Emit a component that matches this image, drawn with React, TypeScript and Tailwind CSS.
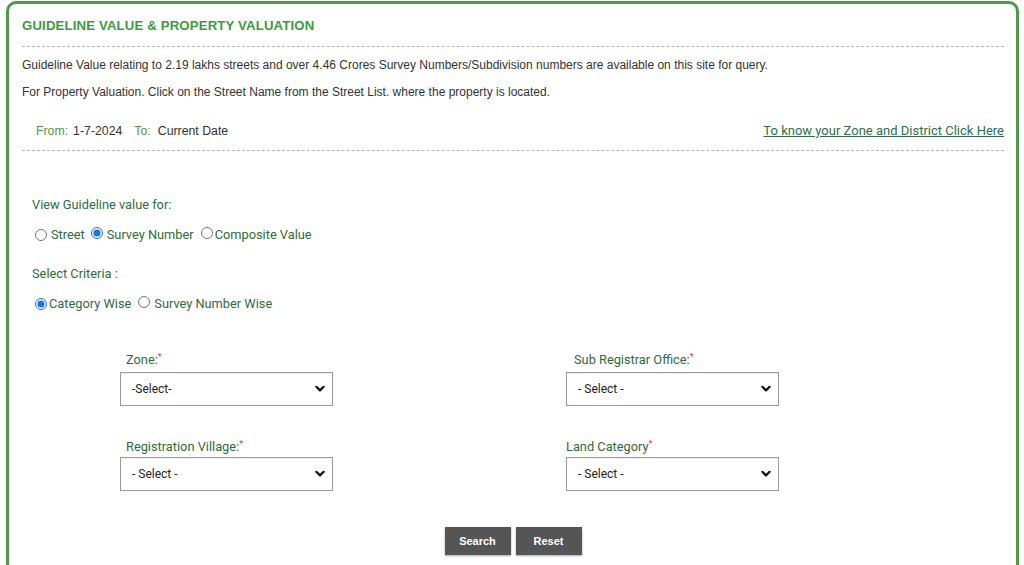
import React from "react";

const Chevron = () => (
  <svg width="10" height="7" viewBox="0 0 10 7" className="absolute right-[4px] top-1/2 -translate-y-1/2 pointer-events-none">
    <path d="M1.4 1.3 L5 4.9 L8.6 1.3" fill="none" stroke="#111" strokeWidth="2.3" strokeLinecap="round" strokeLinejoin="round" />
  </svg>
);

const Select = ({ value }: { value: string }) => (
  <div className="relative w-[213px] h-[34px] border border-[#9a9a9a] bg-white flex items-center pl-[11px] pr-[20px] text-[12px] text-[#222]" style={{ boxShadow: "inset 0 1px 1px rgba(0,0,0,0.06)" }}>
    <span>{value}</span>
    <div className="absolute right-[3px] top-0 bottom-0 w-[14px]">
      <Chevron />
    </div>
  </div>
);

const Radio = ({ checked }: { checked?: boolean }) => (
  <input type="radio" readOnly checked={!!checked} className="w-[12px] h-[12px] m-0 accent-[#1a73e8]" />
);

export default function App() {
  return (
    <div className="w-[1024px] h-[565px] overflow-hidden bg-white" style={{ fontFamily: '"Liberation Sans", Arial, sans-serif' }}>
      <div className="ml-[6px] mt-[1px] w-[1013px] min-h-[620px] border-[3px] border-[#4e9a4b] rounded-[10px] pl-[13px] pr-[12px]">
        <div className="pt-[14px] pb-[12px] border-b border-dashed border-[#b5b5b5]">
          <h1 className="text-[13.2px] leading-[16px] font-bold text-[#3e9a3c] tracking-[0.15px]">GUIDELINE VALUE &amp; PROPERTY VALUATION</h1>
        </div>
        <p className="mt-[10px] text-[12px] leading-[16px] text-[#333]">
          Guideline Value relating to 2.19 lakhs streets and over 4.46 Crores Survey Numbers/Subdivision numbers are available on this site for query.
        </p>
        <p className="mt-[11px] text-[12px] leading-[16px] text-[#333]">
          For Property Valuation. Click on the Street Name from the Street List. where the property is located.
        </p>
        <div className="mt-[23px] pb-[11px] border-b border-dashed border-[#b5b5b5] flex items-center justify-between pl-[14px]">
          <div className="text-[12.3px] leading-[16px] flex gap-[5px]">
            <span className="text-[#4e9a4b]">From:</span>
            <span className="text-[#333]">1-7-2024</span>
            <span className="text-[#4e9a4b] ml-[7px]">To:</span>
            <span className="text-[#333] ml-[2px]">Current Date</span>
          </div>
          <a className="text-[13px] leading-[16px] text-[#2f6e4a] underline" style={{ fontFamily: "Roboto, sans-serif" }}>
            To know your Zone and District Click Here
          </a>
        </div>

        <div style={{ fontFamily: "Roboto, sans-serif" }}>
          <div className="mt-[46px] pl-[10px] text-[12.8px] leading-[16px] text-[#2f6b3c]">View Guideline value for:</div>
          <div className="mt-[14px] pl-[13px] flex items-center text-[12.8px] leading-[16px] text-[#2f6b3c]">
            <Radio />
            <span className="ml-[4px]">Street</span>
            <span className="ml-[6px]"><Radio checked /></span>
            <span className="ml-[4px]">Survey Number</span>
            <span className="ml-[7px]"><Radio /></span>
            <span className="ml-[2px]">Composite Value</span>
          </div>
          <div className="mt-[23px] pl-[10px] text-[12.8px] leading-[16px] text-[#2f6b3c]">Select Criteria :</div>
          <div className="mt-[14px] pl-[13px] flex items-center text-[12.8px] leading-[16px] text-[#2f6b3c]">
            <Radio checked />
            <span className="ml-[2px]">Category Wise</span>
            <span className="ml-[7px]"><Radio /></span>
            <span className="ml-[4px]">Survey Number Wise</span>
          </div>

          <div className="mt-[40px] pl-[98px] flex gap-[233px]">
            <div className="w-[213px]">
              <div className="pl-[6px] text-[12.8px] leading-[16px] text-[#2f6b3c]">Zone:<sup className="text-[#e04040] text-[9px] top-[-4px]">*</sup></div>
              <div className="mt-[4px]"><Select value="-Select-" /></div>
              <div className="mt-[33px] pl-[6px] text-[12.8px] leading-[16px] text-[#2f6b3c]">Registration Village:<sup className="text-[#e04040] text-[9px] top-[-4px]">*</sup></div>
              <div className="mt-[2px]"><Select value="- Select -" /></div>
            </div>
            <div className="w-[213px]">
              <div className="pl-[8px] text-[12.8px] leading-[16px] text-[#2f6b3c]">Sub Registrar Office:<sup className="text-[#e04040] text-[9px] top-[-4px]">*</sup></div>
              <div className="mt-[4px]"><Select value="- Select -" /></div>
              <div className="mt-[33px] text-[12.8px] leading-[16px] text-[#2f6b3c]">Land Category<sup className="text-[#e04040] text-[9px] top-[-4px]">*</sup></div>
              <div className="mt-[2px]"><Select value="- Select -" /></div>
            </div>
          </div>

          <div className="mt-[36px] flex justify-center gap-[5px]" style={{ fontFamily: '"Liberation Sans", Arial, sans-serif' }}>
            <button className="w-[66px] h-[28px] bg-[#555555] text-white text-[11px] font-bold shadow-[0_1px_2px_rgba(0,0,0,0.35)]">Search</button>
            <button className="w-[66px] h-[28px] bg-[#555555] text-white text-[11px] font-bold shadow-[0_1px_2px_rgba(0,0,0,0.35)]">Reset</button>
          </div>
        </div>
      </div>
    </div>
  );
}
